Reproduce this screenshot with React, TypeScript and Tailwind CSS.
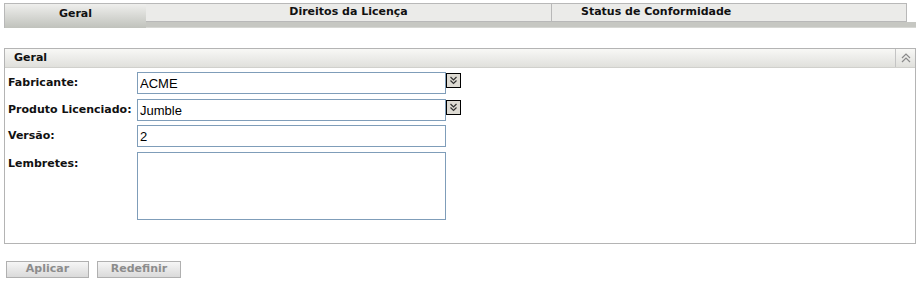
import React from 'react';

const ChevronsDown = () => (
    <svg width="13" height="13" viewBox="0 0 13 13" fill="none" stroke="#333" strokeWidth="1.2">
        <path d="M3.5 3 L6.5 6 L9.5 3" />
        <path d="M3.5 6.5 L6.5 9.5 L9.5 6.5" />
    </svg>
);

const ChevronsUp = () => (
    <svg width="12" height="12" viewBox="0 0 12 12" fill="none" stroke="#8a8a8a" strokeWidth="1.2">
        <path d="M2 6 L6 2 L10 6" />
        <path d="M2 10 L6 6 L10 10" />
    </svg>
);

const DropButton = () => (
    <div className="w-[15px] h-[15px] mt-[1px] border border-black bg-[#dedbd3] flex items-center justify-center">
        <ChevronsDown />
    </div>
);

const inputCls =
    "w-[309px] h-[22px] border border-[#7f9db9] px-[2px] font-['Liberation_Sans',Arial,sans-serif] text-[13px] font-normal text-black outline-none bg-white";

const App: React.FC = () => {
    return (
        <div className="w-[920px] h-[286px] bg-white pt-[3px] px-[4px] font-['DejaVu_Sans',sans-serif] text-[11px] font-bold text-[#111]">
            {/* tabs */}
            <div className="flex w-[912px] h-[25px]">
                <div className="w-[142px] h-[25px] border-t border-l border-[#b8b8b8] bg-gradient-to-b from-[#efefed] to-[#c0c2bc] flex justify-center pt-[2px]">
                    Geral
                </div>
                <div className="w-[406px] flex flex-col">
                    <div className="h-[19px] border border-l-0 border-[#b8b8b8] bg-[#ebebe9] flex items-center justify-center">
                        Direitos da Licença
                    </div>
                    <div className="h-[6px] bg-[#c6c7c2] border-b border-[#d6d7d3]" />
                </div>
                <div className="w-[355px] flex flex-col">
                    <div className="h-[19px] border border-l-0 border-[#b8b8b8] bg-[#ebebe9] flex items-center pl-[29px]">
                        Status de Conformidade
                    </div>
                    <div className="h-[6px] bg-[#c6c7c2] border-b border-[#d6d7d3]" />
                </div>
                <div className="w-[9px] flex flex-col">
                    <div className="h-[19px]" />
                    <div className="h-[6px] bg-[#c6c7c2] border-b border-[#d6d7d3]" />
                </div>
            </div>

            {/* panel */}
            <div className="mt-[20px] w-[912px] border border-[#b4b4b4]">
                <div className="h-[19px] flex bg-gradient-to-b from-[#f8f8f6] to-[#e0e0dc] border-b border-[#d0d0cc]">
                    <div className="flex-1 pl-[9px] flex items-center">Geral</div>
                    <div className="w-[20px] border-l border-[#c4c4c4] flex items-center justify-center">
                        <ChevronsUp />
                    </div>
                </div>

                <div className="pt-[4px] pb-[23px]">
                    <div className="flex items-start h-[22px] mb-[5px]">
                        <div className="w-[132px] pl-[3px] leading-[22px]">Fabricante:</div>
                        <input className={inputCls} defaultValue="ACME" readOnly />
                        <DropButton />
                    </div>
                    <div className="flex items-start h-[22px] mb-[4px]">
                        <div className="w-[132px] pl-[3px] leading-[22px]">Produto Licenciado:</div>
                        <input className={inputCls} defaultValue="Jumble" readOnly />
                        <DropButton />
                    </div>
                    <div className="flex items-start h-[22px] mb-[5px]">
                        <div className="w-[132px] pl-[3px] leading-[22px]">Versão:</div>
                        <input className={inputCls} defaultValue="2" readOnly />
                    </div>
                    <div className="flex items-start">
                        <div className="w-[132px] pl-[3px] pt-[4px]">Lembretes:</div>
                        <textarea className="w-[309px] h-[68px] border border-[#7f9db9] resize-none outline-none bg-white" readOnly />
                    </div>
                </div>
            </div>

            {/* actions */}
            <div className="mt-[17px] pl-[2px] flex gap-[8px]">
                <button className="w-[83px] h-[17px] border border-[#b0b0b0] bg-gradient-to-b from-[#f6f6f6] to-[#dadada] text-[#8c8c8c] font-bold text-[11px] flex items-center justify-center">
                    Aplicar
                </button>
                <button className="w-[84px] h-[17px] border border-[#b0b0b0] bg-gradient-to-b from-[#f6f6f6] to-[#dadada] text-[#8c8c8c] font-bold text-[11px] flex items-center justify-center">
                    Redefinir
                </button>
            </div>
        </div>
    );
};

export default App;
